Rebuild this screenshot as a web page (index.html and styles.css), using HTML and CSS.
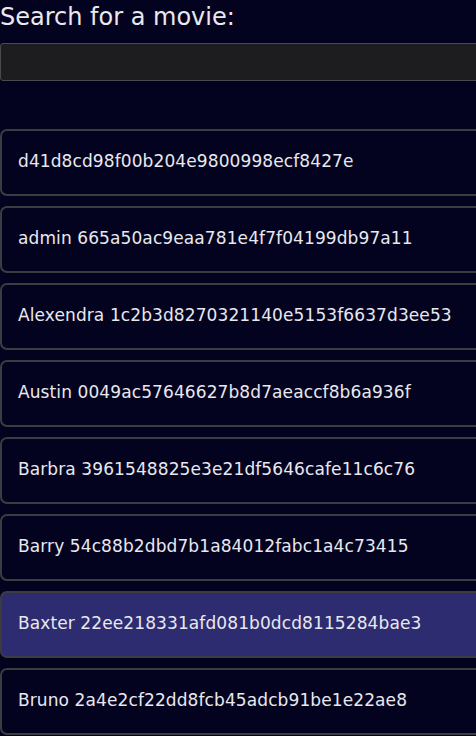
FILE: index.html
```html
<!DOCTYPE html>
<html>
<head>
<meta charset="utf-8">
<link rel="stylesheet" href="styles.css">
</head>
<body>
<div class="page">
  <label class="title" for="q">Search for a movie:</label>
  <input id="q" class="search" type="text">
  <ul class="list">
    <li class="card">d41d8cd98f00b204e9800998ecf8427e</li>
    <li class="card">admin 665a50ac9eaa781e4f7f04199db97a11</li>
    <li class="card">Alexendra 1c2b3d8270321140e5153f6637d3ee53</li>
    <li class="card">Austin 0049ac57646627b8d7aeaccf8b6a936f</li>
    <li class="card">Barbra 3961548825e3e21df5646cafe11c6c76</li>
    <li class="card">Barry 54c88b2dbd7b1a84012fabc1a4c73415</li>
    <li class="card active">Baxter 22ee218331afd081b0dcd8115284bae3</li>
    <li class="card">Bruno 2a4e2cf22dd8fcb45adcb91be1e22ae8</li>
  </ul>
</div>
</body>
</html>
```
FILE: styles.css
```css
html, body {
  margin: 0;
  padding: 0;
  background: #04031f;
}
.page {
  font-family: "DejaVu Sans", "Noto Sans", sans-serif;
  color: #e8e8ee;
  width: 100%;
  height: 736px;
  overflow: hidden;
}
.title {
  display: block;
  font-size: 24px;
  line-height: 34px;
  padding-top: 0;
  padding-bottom: 1px;
}
.search {
  display: block;
  box-sizing: border-box;
  margin-top: 8px;
  width: calc(100% + 40px);
  height: 38px;
  background: #1d1d1f;
  border: 1px solid #4a4a4e;
  border-radius: 3px;
  outline: none;
}
.list {
  list-style: none;
  margin: 48px 0 0 0;
  padding: 0;
  display: flex;
  flex-direction: column;
  gap: 10px;
}
.card {
  box-sizing: border-box;
  flex: none;
  height: 67px;
  width: calc(100% + 40px);
  border: 2px solid #3c3c40;
  border-radius: 7px;
  padding: 0 16px 3px;
  display: flex;
  align-items: center;
  font-size: 17px;
  letter-spacing: 0.1px;
}
.card.active {
  background: #2e2c70;
}
```
